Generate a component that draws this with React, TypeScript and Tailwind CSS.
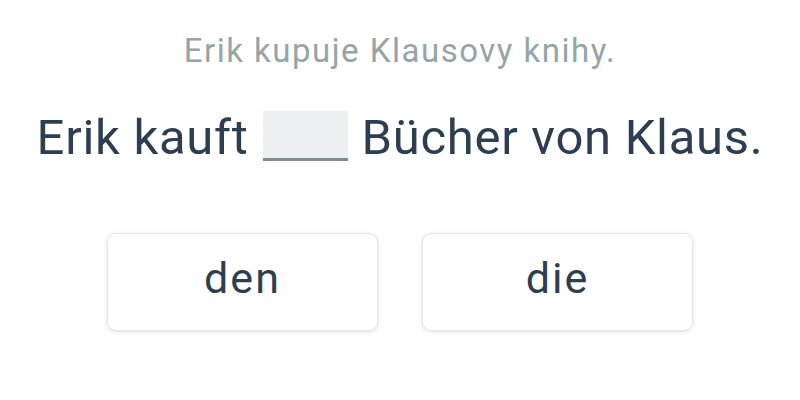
export default function App() {
  return (
    <div
      className="w-[800px] h-[400px] bg-white flex flex-col items-center"
      style={{ fontFamily: 'Roboto, "Noto Sans", sans-serif' }}
    >
      <div className="mt-[29px] text-[33px] leading-[44px] tracking-[1.5px] text-[#95a5a6]">
        Erik kupuje Klausovy knihy.
      </div>
      <div className="mt-[36px] flex items-start text-[49px] leading-[58px] tracking-[0.7px] text-[#2c3e50]">
        <span>Erik kauft</span>
        <span className="ml-[14px] mr-[14px] mt-[2px] inline-block w-[85px] h-[50px] bg-[#ecf0f1] border-b-[3px] border-[#7f8c8d]" />
        <span>Bücher von Klaus.</span>
      </div>
      <div className="mt-[66px] flex gap-[44px]">
        <button className="w-[271px] h-[98px] pb-[8px] bg-white rounded-[9px] border border-[#e5e7eb] shadow-[0_1px_4px_rgba(0,0,0,0.12)] text-[43px] tracking-[2px] text-[#2c3e50]">
          den
        </button>
        <button className="w-[271px] h-[98px] pb-[8px] bg-white rounded-[9px] border border-[#e5e7eb] shadow-[0_1px_4px_rgba(0,0,0,0.12)] text-[43px] tracking-[2px] text-[#2c3e50]">
          die
        </button>
      </div>
    </div>
  );
}
